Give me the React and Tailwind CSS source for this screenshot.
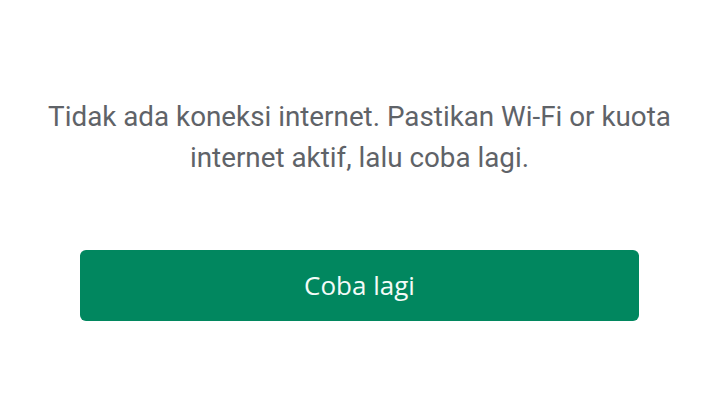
export default function App() {
  return (
    <div className="w-[719px] h-[405px] bg-white flex flex-col items-center font-[Roboto,'Liberation_Sans',sans-serif]">
      <p className="mt-[96px] w-[680px] text-center text-[27.8px] leading-[41px] text-[#5f6368]">
        Tidak ada koneksi internet. Pastikan Wi-Fi or kuota internet aktif, lalu coba lagi.
      </p>
      <button className="mt-[72px] w-[559px] h-[71px] rounded-[6px] bg-[#01875f] text-[#f4fbf8] text-[26px] font-medium font-['Open_Sans',Roboto,sans-serif]">
        Coba lagi
      </button>
    </div>
  );
}
